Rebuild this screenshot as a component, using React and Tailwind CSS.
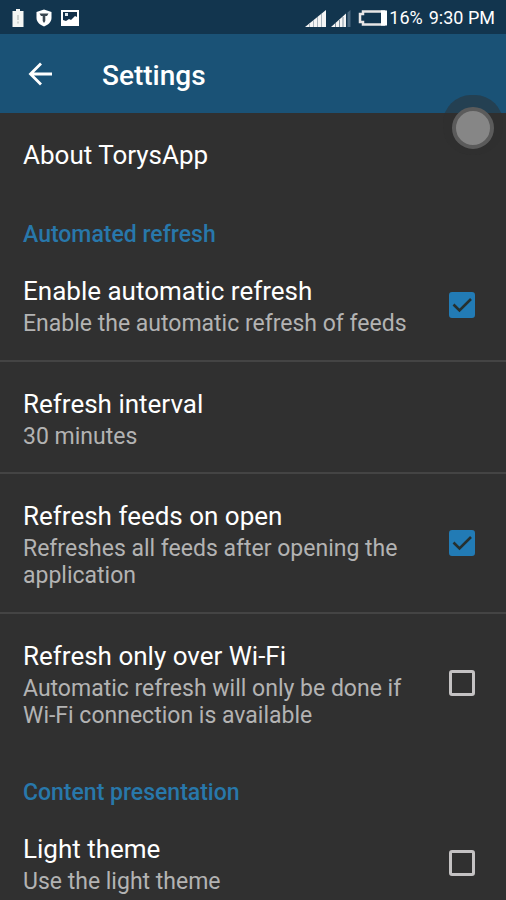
import { useState } from "react";

function StatusBar() {
  return (
    <div className="flex h-[34px] shrink-0 items-center justify-between bg-[#12354e] pt-[2px] pr-[11px] pl-3 text-white">
      <div className="flex items-center gap-3">
        <svg width="12" height="18" viewBox="0 0 12 18" aria-hidden="true">
          <path d="M4 0h4v2h3.500v16h-11V2H4z" fill="#f4f6f4" />
          <path d="M5 6h2v5H5zM5 12.500h2v2H5z" fill="#ccd2d0" />
        </svg>
        <svg width="16" height="18" viewBox="0 0 16 18" aria-hidden="true">
          <path d="M8 0.500 15.500 3v6c0 4-3.500 7-7.500 8.500C4 16 0.500 13 0.500 9V3z" fill="#fff" />
          <path d="M3.500 4.500h9L11 7H9.300v5L8 14l-1.300-2V7H5z" fill="#3a4650" />
        </svg>
        <svg className="-ml-1" width="20" height="18" viewBox="0 0 20 18" aria-hidden="true">
          <path d="M1 1h18v16H1z" fill="#fff" />
          <path d="M3 3h14v5l-2-1-4 4-2-1-3 2-3-1z" fill="#12304a" />
          <path d="M5 4h3v3H5z" fill="#dfe8ee" />
        </svg>
      </div>
      <div className="flex items-center">
        <svg width="22" height="18" viewBox="0 0 22 18" aria-hidden="true">
          <path d="M0 18 21 1v17z" fill="#f4f4f4" />
          <path d="M4.500 14v4M8.500 11v7M12.500 8v10M16.500 5v13" stroke="#a9b4bc" strokeWidth="1" />
        </svg>
        <svg className="ml-1" width="22" height="18" viewBox="0 0 22 18" aria-hidden="true">
          <path d="M0 18 15 4.500V18z" fill="#f4f4f4" />
          <path d="M4.500 14v4M8.500 11v7M12 8v10" stroke="#7f909d" strokeWidth="1" />
          <path d="M16.500 3.500 19.500 1v17h-3z" fill="#49677e" />
        </svg>
        <svg className="ml-1" width="30" height="18" viewBox="0 0 30 18" aria-hidden="true">
          <path d="M6 2.500h21v13H6V13H3V5h3z" fill="none" stroke="#e8e6e6" strokeWidth="2.500" />
          <path d="M24 1.500h6v15h-6z" fill="#fff" />
        </svg>
        <span className="ml-[2px] text-[18px] leading-6">16%</span>
        <span className="ml-[6px] text-[18px] leading-6">9:30 PM</span>
      </div>
    </div>
  );
}

function Category({ children }) {
  return (
    <h2 className="px-[23px] pt-[27px] pb-px text-[23px] leading-[27px] font-medium text-[#2878ab]">
      {children}
    </h2>
  );
}

function Texts({ title, summary }) {
  return (
    <span className="block min-w-0 flex-1">
      <span className="block text-[26px] leading-[38px] text-white">{title}</span>
      <span className="block text-[23px] leading-[27px] text-[#b3b3b3]">{summary}</span>
    </span>
  );
}

function CheckRow({ title, summary, initial = false, divider = false }) {
  const [checked, setChecked] = useState(initial);
  return (
    <label
      className={`flex items-center gap-6 py-[23px] pr-[31px] pl-[23px] ${
        divider ? "border-b-2 border-[#444444]" : ""
      }`}
    >
      <Texts title={title} summary={summary} />
      <span className="relative block size-[26px] shrink-0">
        <input
          type="checkbox"
          checked={checked}
          onChange={(e) => setChecked(e.target.checked)}
          className="block size-[26px] appearance-none rounded-[3px] border-3 border-[#c4c2c3] checked:border-[#227bb5] checked:bg-[#227bb5]"
        />
        {checked && (
          <svg className="pointer-events-none absolute inset-0" width="26" height="26" viewBox="0 0 26 26" aria-hidden="true">
            <path d="M4.500 12.500 10.500 18.500 22 7" fill="none" stroke="#26302f" strokeWidth="2.600" />
          </svg>
        )}
      </span>
    </label>
  );
}

export default function App() {
  return (
    <div className="relative flex h-screen flex-col overflow-hidden bg-[#303030] font-[Roboto,sans-serif]">
      <StatusBar />
      <header className="flex h-[79px] shrink-0 items-center bg-[#1a5276] pl-7 text-white">
        <button type="button" aria-label="Back" className="block">
          <svg width="24" height="24" viewBox="0 0 24 24" fill="none" stroke="currentColor" strokeWidth="2.800" aria-hidden="true">
            <path d="M24 12H2.500M13 1.500 2.500 12 13 22.500" />
          </svg>
        </button>
        <h1 className="ml-[50px] pt-1 text-[28px] leading-9 font-medium">Settings</h1>
      </header>
      <main className="min-h-0 flex-1 overflow-hidden">
        <button type="button" className="block w-full px-[23px] pt-[23px] pb-5 text-left text-[26px] leading-[38px] text-white">
          About TorysApp
        </button>
        <Category>Automated refresh</Category>
        <CheckRow title="Enable automatic refresh" summary="Enable the automatic refresh of feeds" initial divider />
        <button type="button" className="flex w-full border-b-2 border-[#444444] px-[23px] pt-[23px] pb-[22px] text-left">
          <Texts title="Refresh interval" summary="30 minutes" />
        </button>
        <CheckRow title="Refresh feeds on open" summary="Refreshes all feeds after opening the application" initial divider />
        <CheckRow title="Refresh only over Wi-Fi" summary="Automatic refresh will only be done if Wi-Fi connection is available" />
        <Category>Content presentation</Category>
        <CheckRow title="Light theme" summary="Use the light theme" />
      </main>
      <button
        type="button"
        aria-label="Assistive touch"
        className="absolute top-[95px] right-[3px] flex size-[60px] items-center justify-center rounded-[28px] bg-[#2d2d2d]/50 pt-[6px]"
      >
        <span className="block size-[42px] rounded-full border-4 border-[#5b5b5b] bg-[#868686]" />
      </button>
    </div>
  );
}
